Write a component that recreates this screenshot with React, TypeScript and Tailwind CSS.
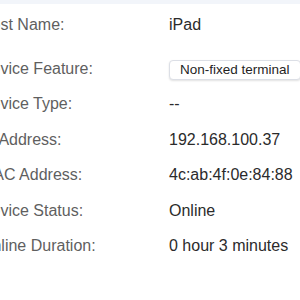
import React from "react";

const rows: { label: string; value: React.ReactNode }[] = [
  { label: "Host Name:", value: "iPad" },
  {
    label: "Device Feature:",
    value: (
      <span className="inline-flex h-[20px] items-center rounded-[4px] border border-[#dcdfe6] bg-white px-[10px] text-[13.5px] text-[#1f1f1f] shadow-[0_1px_2px_rgba(0,0,0,0.12)]">
        Non-fixed terminal
      </span>
    ),
  },
  { label: "Device Type:", value: "--" },
  { label: "IP Address:", value: "192.168.100.37" },
  { label: "MAC Address:", value: "4c:ab:4f:0e:84:88" },
  { label: "Device Status:", value: "Online" },
  { label: "Online Duration:", value: "0 hour 3 minutes" },
];

export default function App() {
  return (
    <div
      className="h-[300px] w-[300px] overflow-hidden bg-white"
      style={{ fontFamily: '"Liberation Sans", Arial, sans-serif' }}
    >
      <div className="h-[4px] w-full bg-[#f2f5fa]" />
      <div className="-ml-[20px] flex flex-col gap-[13.5px] pt-[10px]">
        {rows.map((r, i) => (
          <div
            key={r.label}
            className={
              i === 0
                ? "mb-[8px] flex h-[22px] items-center whitespace-nowrap text-[16px]"
                : "flex h-[22px] items-center whitespace-nowrap text-[16px]"
            }
          >
            <div className="w-[189px] shrink-0 text-[#5f5f5f]">{r.label}</div>
            <div className="text-[#2b2b2b]">{r.value}</div>
          </div>
        ))}
      </div>
    </div>
  );
}
